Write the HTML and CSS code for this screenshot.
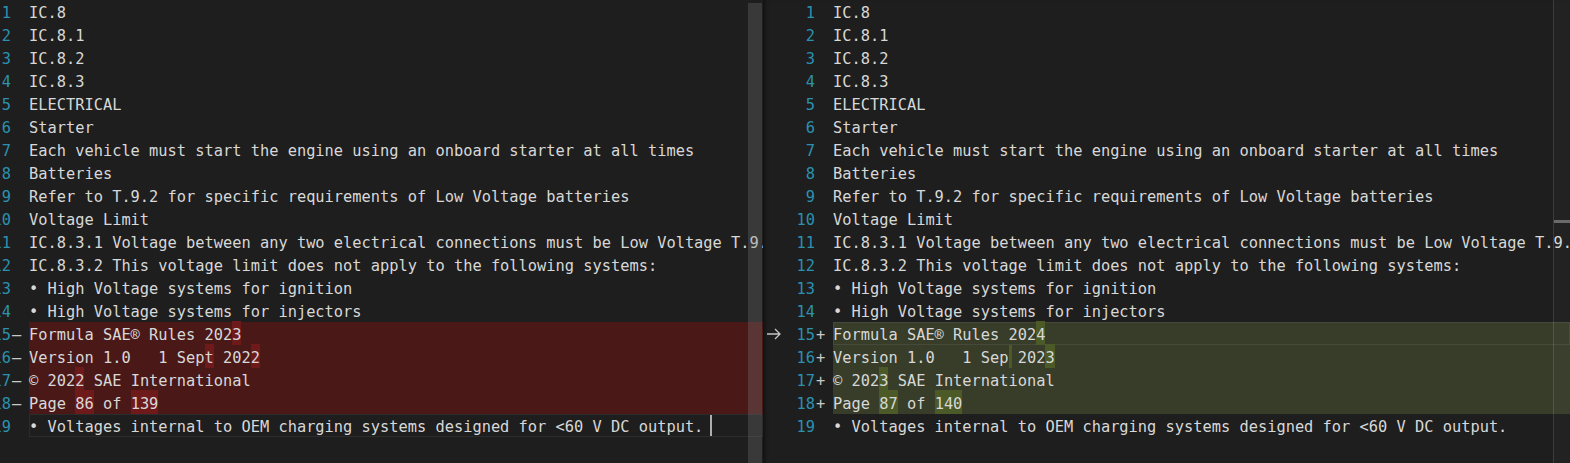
FILE: index.html
```html
<!DOCTYPE html>
<html>
<head>
<meta charset="utf-8">
<link rel="stylesheet" href="styles.css">
</head>
<body>
<div class="diff">
  <div class="pane left">
    <div class="editor">
      <div class="row"><span class="glyph"></span><span class="ln">1</span><span class="ind"></span><span class="code">IC.8</span></div>
      <div class="row"><span class="glyph"></span><span class="ln">2</span><span class="ind"></span><span class="code">IC.8.1</span></div>
      <div class="row"><span class="glyph"></span><span class="ln">3</span><span class="ind"></span><span class="code">IC.8.2</span></div>
      <div class="row"><span class="glyph"></span><span class="ln">4</span><span class="ind"></span><span class="code">IC.8.3</span></div>
      <div class="row"><span class="glyph"></span><span class="ln">5</span><span class="ind"></span><span class="code">ELECTRICAL</span></div>
      <div class="row"><span class="glyph"></span><span class="ln">6</span><span class="ind"></span><span class="code">Starter</span></div>
      <div class="row"><span class="glyph"></span><span class="ln">7</span><span class="ind"></span><span class="code">Each vehicle must start the engine using an onboard starter at all times</span></div>
      <div class="row"><span class="glyph"></span><span class="ln">8</span><span class="ind"></span><span class="code">Batteries</span></div>
      <div class="row"><span class="glyph"></span><span class="ln">9</span><span class="ind"></span><span class="code">Refer to T.9.2 for specific requirements of Low Voltage batteries</span></div>
      <div class="row"><span class="glyph"></span><span class="ln">10</span><span class="ind"></span><span class="code">Voltage Limit</span></div>
      <div class="row"><span class="glyph"></span><span class="ln">11</span><span class="ind"></span><span class="code">IC.8.3.1 Voltage between any two electrical connections must be Low Voltage T.9.1.</span></div>
      <div class="row"><span class="glyph"></span><span class="ln">12</span><span class="ind"></span><span class="code">IC.8.3.2 This voltage limit does not apply to the following systems:</span></div>
      <div class="row"><span class="glyph"></span><span class="ln">13</span><span class="ind"></span><span class="code">• High Voltage systems for ignition</span></div>
      <div class="row"><span class="glyph"></span><span class="ln">14</span><span class="ind"></span><span class="code">• High Voltage systems for injectors</span></div>
      <div class="row"><span class="glyph"></span><span class="ln">15</span><span class="ind">—</span><span class="code del">Formula SAE® Rules 202<span class="cdel">3</span></span></div>
      <div class="row"><span class="glyph"></span><span class="ln">16</span><span class="ind">—</span><span class="code del">Version 1.0   1 Sep<span class="cdel">t</span> 202<span class="cdel">2</span></span></div>
      <div class="row"><span class="glyph"></span><span class="ln">17</span><span class="ind">—</span><span class="code del">© 202<span class="cdel">2</span> SAE International</span></div>
      <div class="row"><span class="glyph"></span><span class="ln">18</span><span class="ind">—</span><span class="code del">Page <span class="cdel">86</span> of <span class="cdel">139</span></span></div>
      <div class="row"><span class="glyph"></span><span class="ln">19</span><span class="ind"></span><span class="code current">• Voltages internal to OEM charging systems designed for &lt;60 V DC output. <span class="cursor"></span></span></div>
    </div>
    <div class="slider"></div>
  </div>
  <div class="pane right">
    <div class="editor">
      <div class="row"><span class="glyph"></span><span class="ln">1</span><span class="ind"></span><span class="code">IC.8</span></div>
      <div class="row"><span class="glyph"></span><span class="ln">2</span><span class="ind"></span><span class="code">IC.8.1</span></div>
      <div class="row"><span class="glyph"></span><span class="ln">3</span><span class="ind"></span><span class="code">IC.8.2</span></div>
      <div class="row"><span class="glyph"></span><span class="ln">4</span><span class="ind"></span><span class="code">IC.8.3</span></div>
      <div class="row"><span class="glyph"></span><span class="ln">5</span><span class="ind"></span><span class="code">ELECTRICAL</span></div>
      <div class="row"><span class="glyph"></span><span class="ln">6</span><span class="ind"></span><span class="code">Starter</span></div>
      <div class="row"><span class="glyph"></span><span class="ln">7</span><span class="ind"></span><span class="code">Each vehicle must start the engine using an onboard starter at all times</span></div>
      <div class="row"><span class="glyph"></span><span class="ln">8</span><span class="ind"></span><span class="code">Batteries</span></div>
      <div class="row"><span class="glyph"></span><span class="ln">9</span><span class="ind"></span><span class="code">Refer to T.9.2 for specific requirements of Low Voltage batteries</span></div>
      <div class="row"><span class="glyph"></span><span class="ln">10</span><span class="ind"></span><span class="code">Voltage Limit</span></div>
      <div class="row"><span class="glyph"></span><span class="ln">11</span><span class="ind"></span><span class="code">IC.8.3.1 Voltage between any two electrical connections must be Low Voltage T.9.1.</span></div>
      <div class="row"><span class="glyph"></span><span class="ln">12</span><span class="ind"></span><span class="code">IC.8.3.2 This voltage limit does not apply to the following systems:</span></div>
      <div class="row"><span class="glyph"></span><span class="ln">13</span><span class="ind"></span><span class="code">• High Voltage systems for ignition</span></div>
      <div class="row"><span class="glyph"></span><span class="ln">14</span><span class="ind"></span><span class="code">• High Voltage systems for injectors</span></div>
      <div class="row"><span class="glyph"><svg width="16" height="12" viewBox="0 0 16 12"><path d="M1 6 H14 M9 1 L14 6 L9 11" fill="none" stroke="#c5c5c5" stroke-width="1.3"/></svg></span><span class="ln">15</span><span class="ind">+</span><span class="code ins focus">Formula SAE® Rules 202<span class="cins">4</span></span></div>
      <div class="row"><span class="glyph"></span><span class="ln">16</span><span class="ind">+</span><span class="code ins">Version 1.0   1 Sep<span class="mark"></span> 202<span class="cins">3</span></span></div>
      <div class="row"><span class="glyph"></span><span class="ln">17</span><span class="ind">+</span><span class="code ins">© 202<span class="cins">3</span> SAE International</span></div>
      <div class="row"><span class="glyph"></span><span class="ln">18</span><span class="ind">+</span><span class="code ins">Page <span class="cins">87</span> of <span class="cins">140</span></span></div>
      <div class="row"><span class="glyph"></span><span class="ln">19</span><span class="ind"></span><span class="code">• Voltages internal to OEM charging systems designed for &lt;60 V DC output.</span></div>
    </div>
    <div class="vscroll"><div class="tick"></div></div>
  </div>
</div>
</body>
</html>
```

FILE: styles.css
```css
html, body {
  margin: 0;
  padding: 0;
  background: #1e1e1e;
  overflow: hidden;
}
.diff {
  display: flex;
  width: 1570px;
  height: 463px;
  font-family: "DejaVu Sans Mono", "Liberation Mono", monospace;
  font-size: 15.35px;
  color: #d8d8d8;
}
.pane {
  position: relative;
  overflow: hidden;
  height: 463px;
}
.pane.left {
  width: 763px;
  flex: none;
}
.pane.left .editor {
  margin-left: -41px;
}
.pane.right {
  flex: 1;
  box-shadow: inset 5px 0 5px -4px rgba(0, 0, 0, 0.6);
}
.editor {
  display: flex;
  flex-direction: column;
}
.row {
  display: flex;
  height: 23px;
  box-sizing: border-box;
  padding-top: 4px;
  line-height: 19px;
  white-space: pre;
}
.glyph {
  width: 20px;
  flex: none;
  display: flex;
  align-items: center;
  justify-content: center;
  padding-left: 2px;
  box-sizing: border-box;
  margin-top: -4px;
}
.glyph svg {
  display: block;
}
.ln {
  width: 32px;
  flex: none;
  text-align: right;
  color: #2b91af;
}
.ind {
  width: 18px;
  flex: none;
  color: #c8c8c8;
  text-align: left;
  padding-left: 1px;
  box-sizing: border-box;
}
.code {
  flex: 1;
  margin-top: -4px;
  padding-top: 4px;
  height: 23px;
  box-sizing: border-box;
}
.del {
  background: #4b1818;
}
.cdel {
  background: #6f1a1a;
  padding: 4.7px 0 0.7px;
}
.ins {
  background: #373d29;
}
.cins {
  background: #4b5a27;
  padding: 4.7px 0 0.7px;
}
.mark {
  display: inline-block;
  width: 3px;
  margin-right: -3px;
  margin-top: -4px;
  height: 23px;
  vertical-align: top;
  background: #4b5a27;
}
.focus {
  box-shadow: inset 0 0 0 1px #454a3a;
}
.current {
  box-shadow: inset 0 0 0 1px #2c2c2c;
}
.cursor {
  display: inline-block;
  width: 2px;
  height: 21px;
  vertical-align: top;
  margin-top: -3px;
  margin-left: -3px;
  background: #aeafad;
}
.slider {
  position: absolute;
  left: 748px;
  top: 3px;
  width: 14px;
  bottom: 0;
  background: rgba(121, 121, 121, 0.3);
}
.vscroll {
  position: absolute;
  right: 0;
  top: 0;
  bottom: 0;
  width: 16px;
  border-left: 1px solid rgba(255, 255, 255, 0.12);
  background: rgba(255, 255, 255, 0.02);
}
.tick {
  position: absolute;
  left: 0;
  right: 0;
  top: 220px;
  height: 3px;
  background: #6a6a6a;
}
```
